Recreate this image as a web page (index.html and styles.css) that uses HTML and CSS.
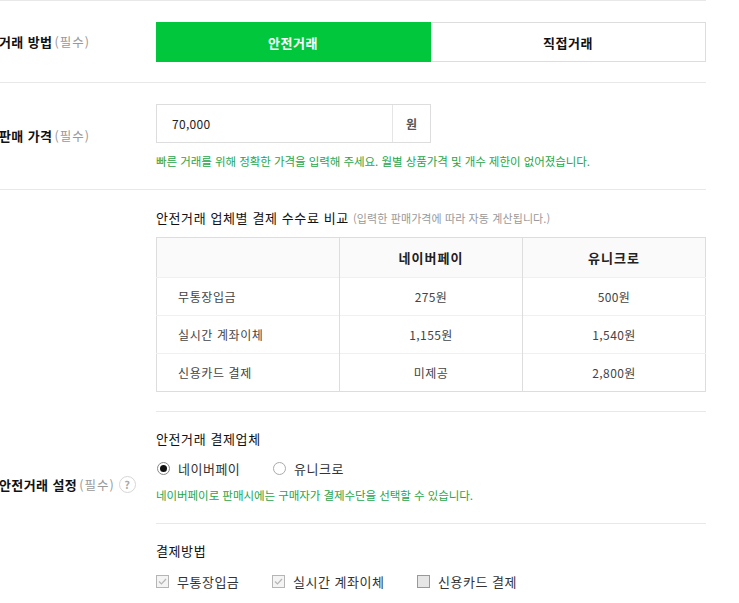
FILE: index.html
```html
<!DOCTYPE html>
<html lang="ko">
<head>
<meta charset="utf-8">
<title>판매 설정</title>
<link rel="stylesheet" href="styles.css">
</head>
<body>
<div class="form">
  <div class="row row-method">
    <div class="row-label"><strong>거래 방법</strong><span class="req">(필수)</span></div>
    <div class="row-body">
      <div class="seg">
        <button class="seg-btn on">안전거래</button>
        <button class="seg-btn">직접거래</button>
      </div>
    </div>
  </div>

  <div class="row row-price">
    <div class="row-label"><strong>판매 가격</strong><span class="req">(필수)</span></div>
    <div class="row-body">
      <div class="price">
        <div class="price-input">70,000</div>
        <div class="price-unit">원</div>
      </div>
      <p class="note">빠른 거래를 위해 정확한 가격을 입력해 주세요. 월별 상품가격 및 개수 제한이 없어졌습니다.</p>
    </div>
  </div>

  <div class="row row-safe">
    <div class="row-label"><strong>안전거래 설정</strong><span class="req">(필수)</span><span class="help">?</span></div>
    <div class="row-body">
      <div class="sub">
        <h3 class="sub-title">안전거래 업체별 결제 수수료 비교 <span class="sub-hint">(입력한 판매가격에 따라 자동 계산됩니다.)</span></h3>
        <table class="fee">
          <thead>
            <tr><th></th><th>네이버페이</th><th>유니크로</th></tr>
          </thead>
          <tbody>
            <tr><td class="name">무통장입금</td><td>275원</td><td>500원</td></tr>
            <tr><td class="name">실시간 계좌이체</td><td>1,155원</td><td>1,540원</td></tr>
            <tr><td class="name">신용카드 결제</td><td>미제공</td><td>2,800원</td></tr>
          </tbody>
        </table>
      </div>
      <div class="sub">
        <h3 class="sub-title">안전거래 결제업체</h3>
        <div class="opts">
          <label class="opt opt-r1"><span class="radio checked"></span>네이버페이</label>
          <label class="opt"><span class="radio"></span>유니크로</label>
        </div>
        <p class="note note-tight">네이버페이로 판매시에는 구매자가 결제수단을 선택할 수 있습니다.</p>
      </div>
      <div class="sub sub-last">
        <h3 class="sub-title">결제방법</h3>
        <div class="opts">
          <label class="opt opt-c1"><span class="check checked"><svg viewBox="0 0 13 13" width="13" height="13"><path d="M3 6.5 L5.5 9 L10 4" fill="none" stroke="#b5b5b5" stroke-width="1.2"/></svg></span>무통장입금</label>
          <label class="opt opt-c2"><span class="check checked"><svg viewBox="0 0 13 13" width="13" height="13"><path d="M3 6.5 L5.5 9 L10 4" fill="none" stroke="#b5b5b5" stroke-width="1.2"/></svg></span>실시간 계좌이체</label>
          <label class="opt"><span class="check off"></span>신용카드 결제</label>
        </div>
      </div>
    </div>
  </div>
</div>
</body>
</html>
```

FILE: styles.css
```css
* { box-sizing: border-box; }
html, body { margin: 0; padding: 0; background: #fff; }
body {
  font-family: "Noto Sans CJK KR", "Noto Sans", sans-serif;
  font-size: 12px;
  color: #333;
  overflow: hidden;
}
.form { width: 706px; border-top: 1px solid #e8e8e8; }
.row { display: flex; border-bottom: 1px solid #e8e8e8; }
.row-label {
  width: 157px;
  flex-shrink: 0;
  display: flex;
  align-items: center;
  margin-left: -1px;
  font-size: 13px;
  line-height: 18px;
  color: #111;
  letter-spacing: 0.4px;
}
.row-label strong { font-weight: 700; }
.req { color: #999; font-size: 12.5px; margin-left: 2px; letter-spacing: 1px; }
.help {
  width: 17px; height: 17px;
  border: 1px solid #d6d6d6;
  border-radius: 50%;
  margin-left: 4px;
  display: inline-flex; align-items: center; justify-content: center;
  font-size: 11px; font-weight: 700; color: #aaa;
  line-height: 1;
  letter-spacing: 0;
}
.row-body { flex: 1; }

.row-method .row-body { padding: 21px 0 20px; }
.seg { display: flex; height: 40px; }
.seg-btn {
  flex: 1;
  margin: 0; padding: 0;
  font-family: inherit; font-size: 13px; font-weight: 700;
  color: #111; background: #fff;
  border: 1px solid #ddd; border-left: 0;
  letter-spacing: 0.5px;
}
.seg-btn.on { background: #00c73c; border-color: #00c73c; color: #fff; }

.row-price .row-body { padding: 21px 0 19px; }
.price { display: flex; width: 275px; height: 39px; border: 1px solid #ddd; }
.price-input { flex: 1; padding-left: 15px; line-height: 37px; font-size: 12px; color: #222; letter-spacing: 0.3px; }
.price-unit {
  width: 38px; border-left: 1px solid #e5e5e5;
  text-align: center; line-height: 37px; font-weight: 700; color: #555;
}
.note {
  margin: 9px 0 0;
  line-height: 18px;
  font-size: 11.5px;
  color: #1ea64a;
  letter-spacing: -0.05px;
}

.row-safe .row-label { align-items: flex-start; padding-top: 286px; }
.sub { padding: 18px 0 19px; border-top: 1px solid #e8e8e8; }
.sub:first-child { border-top: 0; padding-top: 19px; }
.sub-last { padding-bottom: 191px; }
.sub-title {
  margin: 0;
  font-size: 13px; font-weight: 400; color: #111;
  line-height: 18px;
  letter-spacing: 0.6px;
}
.sub-hint { font-size: 11px; color: #999; letter-spacing: 0.1px; }

.fee {
  width: 100%;
  margin-top: 10px;
  border-collapse: collapse;
  border: 1px solid #ddd;
  table-layout: fixed;
}
.fee th, .fee td { height: 38px; padding: 0; text-align: center; font-size: 12px; }
.fee th { height: 40px; background: #fafafa; font-weight: 700; font-size: 13px; color: #222; letter-spacing: 1px; }
.fee th + th, .fee td + td { border-left: 1px solid #ddd; }
.fee tbody tr { border-top: 1px solid #f0f0f0; }
.fee td { color: #444; letter-spacing: 0.4px; }
.fee td.name { text-align: left; padding-left: 21px; letter-spacing: 0.6px; }

.opts { display: flex; align-items: center; margin-top: 11px; height: 18px; }
.opt { display: flex; align-items: center; font-size: 13px; color: #333; letter-spacing: 0.5px; }
.opt-r1 { width: 116px; }
.opt-c1 { width: 116px; }
.opt-c2 { width: 145px; }
.radio {
  width: 13px; height: 13px; border-radius: 50%;
  border: 1px solid #888; margin-right: 8px; margin-left: 1px;
  display: inline-flex; align-items: center; justify-content: center;
  background: #fff;
}
.radio.checked::after { content: ""; width: 7px; height: 7px; border-radius: 50%; background: #111; }
.radio:not(.checked) { border-color: #aaa; }
.check {
  width: 13px; height: 13px;
  border: 1px solid #b5b5b5;
  margin-right: 8px;
  display: inline-flex; background: #f4f4f4;
}
.check svg { margin: -1px; }
.check.off { background: #e6e6e6; border-color: #999; }
.note-tight { margin-top: 9px; }
.sub-last .opts { margin-top: 12px; }
```
